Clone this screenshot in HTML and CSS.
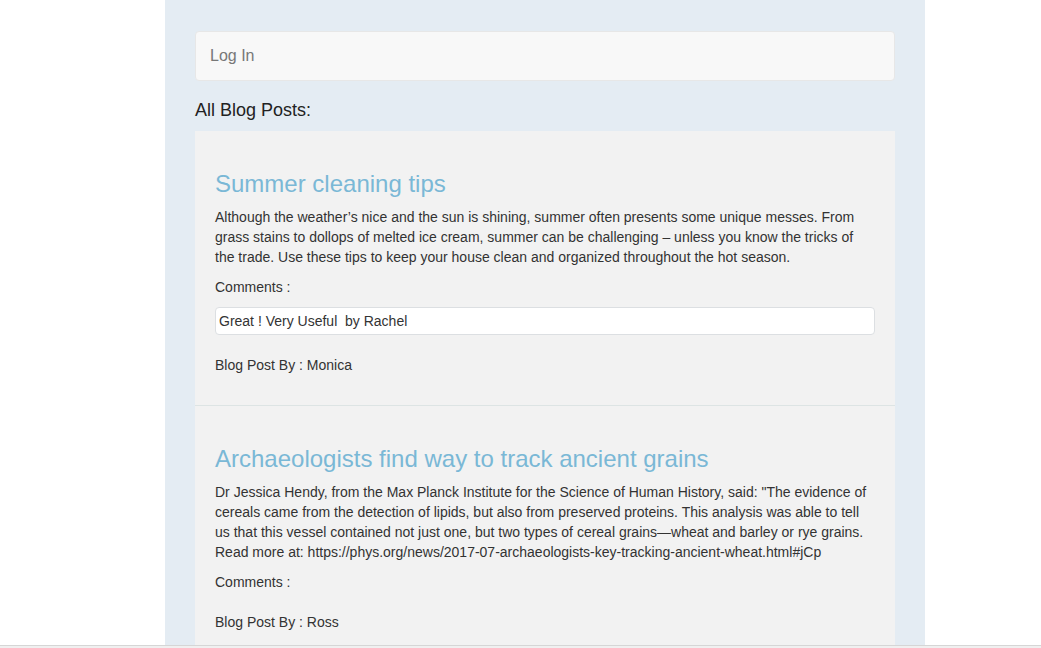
FILE: index.html
```html
<!DOCTYPE html>
<html lang="en">
<head>
<meta charset="utf-8">
<title>Blog</title>
<link rel="stylesheet" href="styles.css">
</head>
<body>
<div class="page">
  <nav class="navbar">
    <span class="navbar-link">Log In</span>
  </nav>
  <h4 class="section-title">All Blog Posts:</h4>
  <div class="posts">
    <article class="post">
      <h3 class="post-title">Summer cleaning tips</h3>
      <p class="post-body">Although the weather’s nice and the sun is shining, summer often presents some unique messes. From grass stains to dollops of melted ice cream, summer can be challenging – unless you know the tricks of the trade. Use these tips to keep your house clean and organized throughout the hot season.</p>
      <p class="label">Comments :</p>
      <div class="comments">
        <div class="comment">Great ! Very Useful &nbsp;by Rachel</div>
      </div>
      <p class="author">Blog Post By : Monica</p>
    </article>
    <article class="post">
      <h3 class="post-title">Archaeologists find way to track ancient grains</h3>
      <p class="post-body">Dr Jessica Hendy, from the Max Planck Institute for the Science of Human History, said: "The evidence of cereals came from the detection of lipids, but also from preserved proteins. This analysis was able to tell us that this vessel contained not just one, but two types of cereal grains—wheat and barley or rye grains. Read more at: https://phys.org/news/2017-07-archaeologists-key-tracking-ancient-wheat.html#jCp</p>
      <p class="label">Comments :</p>
      <div class="comments"></div>
      <p class="author">Blog Post By : Ross</p>
    </article>
  </div>
</div>
<div class="window-edge"></div>
</body>
</html>
```

FILE: styles.css
```css
html, body {
  margin: 0;
  padding: 0;
  background: #ffffff;
}

body {
  font-family: "Liberation Sans", Arial, Helvetica, sans-serif;
  font-size: 14px;
  line-height: 20px;
  color: #333333;
}

.page {
  margin-left: 165px;
  width: 760px;
  box-sizing: border-box;
  padding: 31px 30px 30px;
  background: #e4ecf3;
  min-height: 100vh;
}

.navbar {
  box-sizing: border-box;
  height: 50px;
  display: flex;
  align-items: center;
  padding-left: 14px;
  background: #f8f8f8;
  border: 1px solid #e7e7e7;
  border-radius: 4px;
  margin-bottom: 20px;
}

.navbar-link {
  font-size: 16px;
  color: #777777;
}

.section-title {
  margin: 0 0 10px;
  font-size: 18px;
  font-weight: normal;
  line-height: 1.1;
  color: #222222;
}

.posts {
  background: #f2f2f2;
}

.post {
  display: flex;
  flex-direction: column;
  padding: 20px;
}

.post + .post {
  border-top: 1px solid #dde4e4;
}

.post-title {
  margin: 20px 0 10px;
  font-size: 24px;
  font-weight: normal;
  line-height: 26px;
  color: #7ab8d6;
}

.post-body,
.label,
.author {
  margin: 0 0 10px;
}

.comments {
  margin-bottom: 10px;
}

.comment {
  box-sizing: border-box;
  height: 28px;
  padding: 3px;
  background: #ffffff;
  border: 1px solid #dcdfe2;
  border-radius: 4px;
  margin-bottom: 10px;
}

.window-edge {
  position: fixed;
  left: 0;
  right: 0;
  bottom: 0;
  height: 3px;
  box-sizing: border-box;
  border-top: 1px solid #d6d6d6;
  background: #f0f0f0;
}
```
